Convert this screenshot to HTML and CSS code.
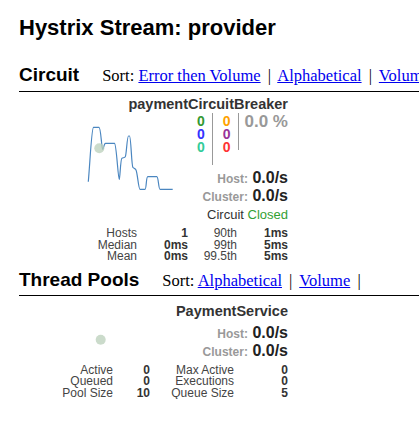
FILE: index.html
```html
<!DOCTYPE html>
<html lang="en">
<head>
  <meta charset="UTF-8" />
  <meta name="viewport" content="width=device-width, initial-scale=1.0" />
  <title>Hystrix Monitor</title>
  <link rel="stylesheet" href="styles.css">
</head>
<body>
  <div class="page">

    <h2 class="page-title">Hystrix Stream: provider</h2>

    <!-- Circuits -->
    <div class="section">
      <div class="menubar">
        <div class="menubar-title">Circuit</div>
        <div class="menubar-actions">
          Sort: <a href="#">Error then Volume</a> <span class="sep">|</span>
          <a href="#">Alphabetical</a> <span class="sep">|</span>
          <a href="#">Volume</a> <span class="sep">|</span>
          <a href="#">Error</a> <span class="sep">|</span>
          <a href="#">Mean</a> <span class="sep">|</span>
          <a href="#">Median</a> <span class="sep">|</span>
          <a href="#">90</a> <span class="sep">|</span>
          <a href="#">99</a> <span class="sep">|</span>
          <a href="#">99.5</a>
        </div>
      </div>

      <div class="monitor">
        <div class="monitor-name">paymentCircuitBreaker</div>
        <div class="monitor-body">
          <svg class="chart" width="150" height="80" viewBox="0 0 150 80">
            <path class="sparkline" d="M45.3 68.7 C47 50 48.5 15 50.5 14.3 L56 14.3 C58 14.5 58.5 36 59.7 36.3 C60.5 36 61 30.5 62.5 30.3 L71.5 30.3 C73.5 31 75 66 76.3 66.3 C77 66 77.5 46 78.9 45.3 C80 44.5 81.5 45 82.3 43.7 C83.5 42 84 23 85.5 23 L86.5 23 C88 23 88.5 53 89.9 54.3 C91 55.5 92 55 93 57 C94.5 60 95.5 76.3 97 76.3 L102 76.3 C103.5 76.3 103 63.7 104.8 63.7 L113.8 63.7 C115.5 63.7 115.5 76.3 117 76.3 L129.7 76.3" />
            <circle class="health" cx="56.3" cy="35.3" r="5" />
          </svg>
          <div class="monitor-stats">
            <div class="counters">
              <div class="counter-col counter-col-long">
                <span class="success">0</span>
                <span class="short-circuited">0</span>
                <span class="bad-request">0</span>
              </div>
              <div class="counter-col counter-col-short">
                <span class="timeout">0</span>
                <span class="rejected">0</span>
                <span class="failure">0</span>
              </div>
              <div class="error-pct">0.0 %</div>
            </div>
            <div class="rate"><span class="rate-label">Host:</span> <span class="rate-value">0.0/s</span></div>
            <div class="rate"><span class="rate-label">Cluster:</span> <span class="rate-value">0.0/s</span></div>
            <div class="circuit-status">Circuit <span class="closed">Closed</span></div>
          </div>
        </div>
        <div class="stats-table circuit-table">
          <span class="cell-header">Hosts</span><span class="cell-data">1</span><span class="cell-header">90th</span><span class="cell-data">1ms</span>
          <span class="cell-header">Median</span><span class="cell-data">0ms</span><span class="cell-header">99th</span><span class="cell-data">5ms</span>
          <span class="cell-header">Mean</span><span class="cell-data">0ms</span><span class="cell-header">99.5th</span><span class="cell-data">5ms</span>
        </div>
      </div>
    </div>

    <!-- Thread pools -->
    <div class="section section-pools">
      <div class="menubar">
        <div class="menubar-title">Thread Pools</div>
        <div class="menubar-actions">
          Sort: <a href="#">Alphabetical</a> <span class="sep">|</span>
          <a href="#">Volume</a> <span class="sep">|</span>
        </div>
      </div>

      <div class="monitor monitor-pool">
        <div class="monitor-name">PaymentService</div>
        <div class="monitor-body">
          <svg class="chart" width="150" height="36" viewBox="0 0 150 36">
            <circle class="health" cx="57.7" cy="15.8" r="5" />
          </svg>
          <div class="monitor-stats">
            <div class="rate"><span class="rate-label">Host:</span> <span class="rate-value">0.0/s</span></div>
            <div class="rate"><span class="rate-label">Cluster:</span> <span class="rate-value">0.0/s</span></div>
          </div>
        </div>
        <div class="stats-table pool-table">
          <span class="cell-header">Active</span><span class="cell-data">0</span><span class="cell-header">Max Active</span><span class="cell-data">0</span>
          <span class="cell-header">Queued</span><span class="cell-data">0</span><span class="cell-header">Executions</span><span class="cell-data">0</span>
          <span class="cell-header">Pool Size</span><span class="cell-data">10</span><span class="cell-header">Queue Size</span><span class="cell-data">5</span>
        </div>
      </div>
    </div>

  </div>
</body>
</html>
```

FILE: styles.css
```css
body {
  margin: 0;
  background: #fff;
  color: #000;
  font-family: "Liberation Sans", Arial, sans-serif;
  overflow: hidden;
}

.page {
  padding: 15px 0 0 19px;
  width: 700px;
}

.page-title {
  margin: 0;
  font-size: 22px;
  line-height: 26px;
  font-weight: bold;
}

/* Menu bar above each group */
.section {
  margin-top: 23px;
}

.section-pools {
  margin-top: 6px;
}

.menubar {
  display: flex;
  align-items: baseline;
  padding-bottom: 4px;
  border-bottom: 1px solid #000;
  white-space: nowrap;
}

.menubar-title {
  font-size: 19px;
  line-height: 22px;
  font-weight: bold;
}

.menubar-actions {
  margin-left: 23px;
  font-family: "Liberation Serif", "Times New Roman", serif;
  font-size: 16.5px;
  line-height: 22px;
}

.menubar-actions a {
  color: #0000ee;
}

.sep {
  margin: 0 3px;
}

.section-pools .menubar {
  padding-bottom: 3px;
}

/* Monitor box */
.monitor {
  width: 245px;
  margin-left: 24px;
  padding-top: 4px;
  color: #333;
}

.monitor-pool {
  padding-top: 7px;
}

.monitor-name {
  text-align: right;
  font-size: 14.5px;
  line-height: 17px;
  font-weight: bold;
}

.monitor-body {
  display: flex;
  justify-content: space-between;
  align-items: flex-start;
}

.monitor-pool .monitor-body {
  margin-top: 4px;
}

.chart {
  display: block;
  flex: none;
}

.sparkline {
  fill: none;
  stroke: #4a86c0;
  stroke-width: 1.2;
}

.health {
  fill: #b9cfb9;
  opacity: 0.75;
}

.monitor-stats {
  display: flex;
  flex-direction: column;
  align-items: flex-end;
}

/* Request counters */
.counters {
  display: flex;
  align-items: flex-start;
  height: 52px;
  margin-bottom: 4px;
}

.counter-col {
  display: flex;
  flex-direction: column;
  padding: 2px 7px 0 0;
  border-right: 1px solid #999;
  font-size: 14px;
  line-height: 13px;
  font-weight: bold;
  box-sizing: border-box;
}

.counter-col-long {
  height: 52px;
}

.counter-col-short {
  height: 37px;
  padding-left: 10px;
}

.error-pct {
  padding-left: 6px;
  font-size: 17px;
  line-height: 17px;
  font-weight: bold;
  color: #999;
}

.success { color: #339933; }
.short-circuited { color: #3333ff; }
.bad-request { color: #33cc99; }
.timeout { color: #ffa200; }
.rejected { color: #993399; }
.failure { color: #ff3333; }

.rate {
  line-height: 18px;
  height: 18px;
}

.rate-label {
  font-size: 12px;
  font-weight: bold;
  color: #999;
}

.rate-value {
  font-size: 16px;
  font-weight: bold;
  color: #222;
}

.circuit-status {
  margin-top: 1px;
  font-size: 13px;
  line-height: 17px;
}

.closed {
  color: #33a033;
}

/* Latency / pool tables */
.stats-table {
  display: grid;
  font-size: 12px;
  line-height: 11.5px;
  text-align: right;
  margin-top: 5px;
}

.circuit-table {
  grid-template-columns: 94px 51px 49px 51px;
}

.pool-table {
  grid-template-columns: 70px 37px 84px 54px;
  margin-top: 5px;
}

.cell-header {
  color: #444;
}

.cell-data {
  font-weight: bold;
  color: #333;
}
```
